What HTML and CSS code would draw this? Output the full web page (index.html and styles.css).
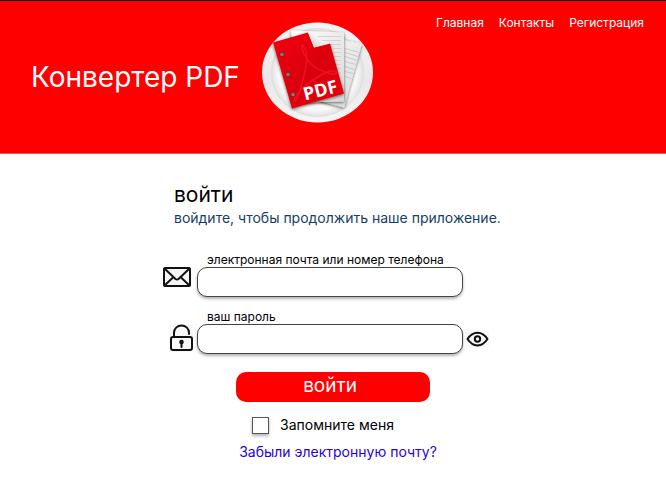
FILE: index.html
```html
<!DOCTYPE html>
<html lang="ru">
<head>
<meta charset="utf-8">
<meta name="viewport" content="width=device-width, initial-scale=1">
<title>Конвертер PDF</title>
<link rel="stylesheet" href="styles.css">
</head>
<body>
<header class="header">
  <h1 class="brand">Конвертер PDF</h1>
  <svg class="logo" viewBox="0 0 111 100" aria-hidden="true">
    <defs>
      <radialGradient id="plate"><stop offset="0" stop-color="#fff"/><stop offset=".84" stop-color="#fafafa"/><stop offset="1" stop-color="#e2e2e2"/></radialGradient>
      <linearGradient id="rim" x2="0" y2="1"><stop offset="0" stop-color="#f4f4f4"/><stop offset=".6" stop-color="#e8e8e8"/><stop offset="1" stop-color="#f6f6f6"/></linearGradient>
      <linearGradient id="cover" x2="1" y2="1"><stop offset="0" stop-color="#f40008"/><stop offset=".55" stop-color="#d90007"/><stop offset="1" stop-color="#ec0008"/></linearGradient>
      <linearGradient id="sheet" x2="1" y2="1"><stop offset="0" stop-color="#fff"/><stop offset="1" stop-color="#d8d8d8"/></linearGradient>
      <linearGradient id="fold" x1="1" x2="0" y2="1"><stop offset="0" stop-color="#fff"/><stop offset=".5" stop-color="#f2f2f2"/><stop offset="1" stop-color="#c4c4c4"/></linearGradient>
      <filter id="shade" x="-20%" y="-20%" width="140%" height="140%"><feDropShadow dx="0" dy="1" stdDeviation="1.500" flood-opacity=".6"/></filter>
    </defs>
    <ellipse cx="55.500" cy="50" rx="55.500" ry="50" fill="url(#rim)"/>
    <ellipse cx="55.500" cy="50" rx="46" ry="44" fill="url(#plate)" stroke="#dedede"/>
    <path d="M56 13L100 21L82 85L40 74Z" fill="url(#sheet)" filter="url(#shade)"/>
    <path d="M83 26l14 4M83 30l13 4M83 34l12 4M83 39l11 3M83 44l9 3M83 49l8 2M83 54l6 2" stroke="#bbb" stroke-width=".7"/>
    <path d="M29 8L82 10L82 79L38 80Z" fill="url(#sheet)" filter="url(#shade)"/>
    <path d="M56 14h23M60 18h19M68 22h11M71 26h8M71 30h8M72 34h7M73 38h6M74 42h5M75 46h4M76 50h3" stroke="#ccc" stroke-width=".8"/>
    <path d="M11 20L46 10L52 25L68 21L82 71L30 86Z" fill="url(#cover)" filter="url(#shade)"/>
    <path d="M46 10L48 9Q58 19 68 21L52 25Z" fill="url(#fold)"/>
    <path d="M32 78C33 68 66 44 74 49C79 55 49 50 42 31C35 14 48 25 44 43C41 59 35 82 32 78Z" fill="none" stroke="#ff303a" stroke-opacity=".4" stroke-width="1.500"/>
    <g fill="#777" stroke="#a30009" stroke-width=".8"><circle cx="20" cy="32" r="2.400"/><circle cx="26" cy="52" r="2.400"/><circle cx="31" cy="72" r="2.400"/></g>
    <text class="logo-text" transform="translate(43 78) rotate(-14)">PDF</text>
  </svg>
  <nav class="nav" aria-label="Основная навигация">
    <a href="#home">Главная</a>
    <a href="#contacts">Контакты</a>
    <a href="#register">Регистрация</a>
  </nav>
</header>
<main class="main">
  <form class="login">
    <div class="intro">
      <h2 class="title">войти</h2>
      <p class="subtitle">войдите, чтобы продолжить наше приложение.</p>
    </div>
    <div class="field">
      <label class="label" for="email">электронная почта или номер телефона</label>
      <svg class="icon mail" viewBox="0 0 28 20" aria-hidden="true"><rect x="1" y="1" width="26" height="18" rx="1.500" fill="#f5f5f5"/><path d="M1.500 1.500L12.500 12Q14 13 15.500 12L26.500 1.500M1.500 18.500L10.500 10M26.500 18.500L17.500 10"/></svg>
      <input class="input" id="email" type="text">
    </div>
    <div class="field">
      <label class="label" for="password">ваш пароль</label>
      <svg class="icon lock" viewBox="0 0 24 28" aria-hidden="true"><path class="tile" d="M0 0h24v28H0z"/><rect x="2" y="13" width="21" height="13" rx="2"/><path d="M5 13V9C5 -1 20 -1 20 9v1M12.500 19v4"/><circle cx="12.500" cy="18" r="1.300"/></svg>
      <input class="input" id="password" type="password">
      <button class="reveal" type="button" aria-label="Показать пароль"><svg class="icon eye" viewBox="0 0 23 16" aria-hidden="true"><path class="tile" d="M0 0h23v16H0z"/><path d="M1.500 8C7 -.5 16 -.5 21.500 8C16 16.500 7 16.500 1.500 8Z"/><circle cx="11.500" cy="8" r="2.700"/></svg></button>
    </div>
    <div class="actions">
      <button class="submit" type="submit">войти</button>
      <label class="remember"><input class="check" type="checkbox">Запомните меня</label>
      <a class="forgot" href="#forgot">Забыли электронную почту?</a>
    </div>
  </form>
</main>
</body>
</html>
```
FILE: styles.css
```css
* {
  box-sizing: border-box;
}

body {
  margin: 0;
  background: #fff;
  color: #000;
  font-family: Inter, "Liberation Sans", sans-serif;
}

h1, h2, p {
  margin: 0;
  font-weight: 400;
}

.header {
  display: flex;
  align-items: flex-start;
  padding: 21px 22px 30px 31px;
  border-top: 1px solid #000;
  border-bottom: 1px solid #ff4a45;
  background: #f00;
}

.brand {
  align-self: center;
  margin-top: 8px;
  color: #fff;
  font-size: 28px;
  line-height: 36px;
  white-space: nowrap;
}

.logo {
  flex: none;
  width: 111px;
  height: 101px;
  margin-left: 22px;
}

.logo-text {
  fill: #fff;
  font-family: "Open Sans", sans-serif;
  font-size: 18px;
  font-weight: 700;
}

.nav {
  display: flex;
  gap: 15px;
  margin-top: -7px;
  margin-left: auto;
  font-size: 12px;
  line-height: 16px;
}

.nav a {
  color: #fff;
  text-decoration: none;
}

.main {
  display: flex;
  justify-content: center;
  padding: 27px 14px 28px 0;
}

.login {
  width: 326px;
}

.intro {
  margin-bottom: 25px;
  padding-left: 11px;
  white-space: nowrap;
}

.title {
  font-size: 21px;
  line-height: 28px;
}

.subtitle {
  color: #173e64;
  font-size: 14px;
  line-height: 18px;
}

.field {
  display: grid;
  grid-template-columns: 34px 1fr 26px;
  align-items: center;
  margin-bottom: 12px;
}

.label {
  grid-column: 2 / 4;
  padding-left: 10px;
  font-size: 12px;
  line-height: 15px;
}

.icon {
  display: block;
  grid-column: 1;
  fill: none;
  stroke: #111;
  stroke-width: 2;
  stroke-linecap: round;
  stroke-linejoin: round;
}

.icon .tile {
  fill: #f8f8f8;
  stroke: none;
}

.mail {
  width: 28px;
  height: 20px;
  margin-bottom: 10px;
}

.lock {
  width: 24px;
  height: 28px;
  margin-bottom: 2px;
  margin-left: 6px;
}

.eye {
  width: 23px;
  height: 16px;
}

.reveal {
  justify-self: end;
  padding: 0;
  border: 0;
  background: none;
}

.input {
  grid-column: 2;
  width: 100%;
  height: 30px;
  padding: 0 10px;
  border: 1px solid #444;
  border-radius: 10px;
  background: #fff;
  box-shadow: 0 2px 3px rgba(0, 0, 0, 0.3);
  font: inherit;
  font-size: 14px;
}

.actions {
  display: flex;
  flex-direction: column;
  align-items: center;
  padding: 6px 0 0 14px;
}

.submit {
  width: 194px;
  height: 30px;
  padding: 0 6px 2px 0;
  border: 0;
  border-radius: 10px;
  background: #f00;
  color: #fff;
  font: 400 19px/28px Inter, "Liberation Sans", sans-serif;
}

.remember {
  display: flex;
  align-items: center;
  gap: 11px;
  margin-top: 14px;
  margin-right: 20px;
  font-size: 14px;
  line-height: 18px;
}

.check {
  appearance: none;
  width: 17px;
  height: 17px;
  margin: 0;
  border: 1px solid #555;
  background: #fff;
  box-shadow: 0 2px 3px rgba(0, 0, 0, 0.3);
}

.forgot {
  margin-top: 9px;
  margin-left: 10px;
  color: #2800e0;
  font-size: 14px;
  line-height: 18px;
  text-decoration: none;
}
```
